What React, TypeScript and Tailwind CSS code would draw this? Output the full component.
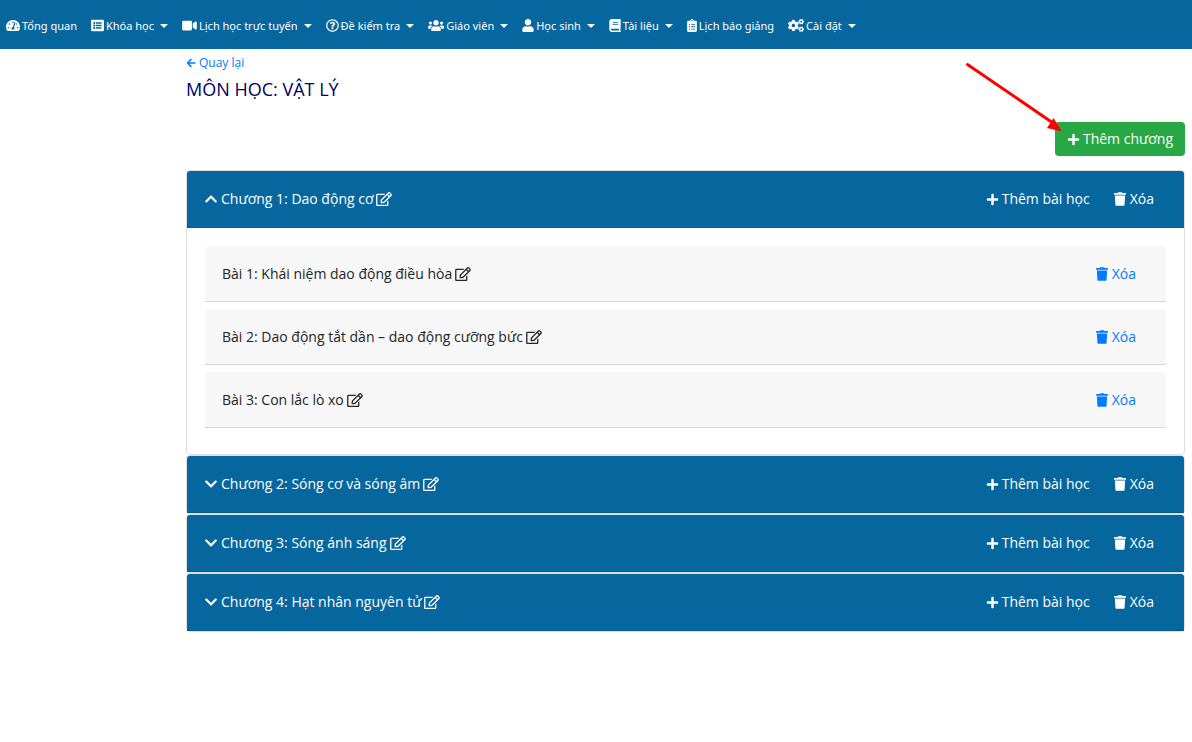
import { useState } from "react";
import type { IconType } from "react-icons";
import {
  FaArrowLeft,
  FaBook,
  FaChevronDown,
  FaChevronUp,
  FaClipboardList,
  FaCogs,
  FaListAlt,
  FaPlus,
  FaRegEdit,
  FaRegQuestionCircle,
  FaTachometerAlt,
  FaTrash,
  FaUser,
  FaUsers,
  FaVideo,
} from "react-icons/fa";

type NavItem = { label: string; icon: IconType; size: string; menu?: boolean };
type Chapter = { title: string; lessons: string[] };

const NAV: NavItem[] = [
  { label: "Tổng quan", icon: FaTachometerAlt, size: "w-[14px]" },
  { label: "Khóa học", icon: FaListAlt, size: "w-[13px]", menu: true },
  { label: "Lịch học trực tuyến", icon: FaVideo, size: "w-[15px]", menu: true },
  { label: "Đề kiểm tra", icon: FaRegQuestionCircle, size: "w-[13px]", menu: true },
  { label: "Giáo viên", icon: FaUsers, size: "w-4", menu: true },
  { label: "Học sinh", icon: FaUser, size: "w-3", menu: true },
  { label: "Tài liệu", icon: FaBook, size: "w-3", menu: true },
  { label: "Lịch báo giảng", icon: FaClipboardList, size: "w-[10px]" },
  { label: "Cài đặt", icon: FaCogs, size: "w-4", menu: true },
];

const CHAPTERS: Chapter[] = [
  {
    title: "Chương 1: Dao động cơ",
    lessons: [
      "Bài 1: Khái niệm dao động điều hòa",
      "Bài 2: Dao động tắt dần – dao động cưỡng bức",
      "Bài 3: Con lắc lò xo",
    ],
  },
  { title: "Chương 2: Sóng cơ và sóng âm", lessons: [] },
  { title: "Chương 3: Sóng ánh sáng", lessons: [] },
  { title: "Chương 4: Hạt nhân nguyên tử", lessons: [] },
];

export default function App() {
  const [open, setOpen] = useState(0);

  return (
    <div className="min-h-screen bg-white font-['Open_Sans','Noto_Sans',sans-serif] text-sm text-[#212529]">
      <Navbar />
      <main className="pr-[7px] pb-8 pl-[186px]">
        <a
          href="#subjects"
          className="mt-1 inline-flex items-center gap-[3px] text-xs leading-5 text-[#007bff]"
        >
          <FaArrowLeft className="size-[10px]" />
          Quay lại
        </a>
        <h1 className="mt-1 text-lg leading-6 font-medium text-[#000066]">
          MÔN HỌC: VẬT LÝ
        </h1>

        <div className="mt-[21px] flex justify-end">
          <div className="relative">
            <button
              type="button"
              className="flex h-[34px] items-center gap-[3px] rounded bg-[#28a745] px-3 text-white"
            >
              <FaPlus className="size-[13px]" />
              Thêm chương
            </button>
            <Pointer />
          </div>
        </div>

        <div className="mt-[14px]">
          {CHAPTERS.map((chapter, i) => (
            <ChapterCard
              key={chapter.title}
              chapter={chapter}
              expanded={open === i}
              onToggle={() => setOpen(open === i ? -1 : i)}
            />
          ))}
        </div>
      </main>
    </div>
  );
}

function Navbar() {
  return (
    <nav className="flex min-h-[49px] flex-wrap items-center gap-x-[14px] bg-[#06669e] px-[6px] pt-[3px] font-['Noto_Sans',sans-serif] text-[11px] text-white">
      {NAV.map(({ label, icon: Icon, size, menu }) => (
        <a
          key={label}
          href="#nav"
          className="flex items-center gap-[2px] whitespace-nowrap"
        >
          <Icon className={`h-[13px] shrink-0 ${size}`} />
          {label}
          {menu && (
            <span className="ml-1 border-x-4 border-t-4 border-x-transparent border-t-white" />
          )}
        </a>
      ))}
    </nav>
  );
}

function ChapterCard({
  chapter,
  expanded,
  onToggle,
}: {
  chapter: Chapter;
  expanded: boolean;
  onToggle: () => void;
}) {
  const Chevron = expanded ? FaChevronUp : FaChevronDown;

  return (
    <section className="rounded border border-[#dfdfdf]">
      <header className="flex h-[57px] items-center justify-between rounded-t-[3px] border-b border-[#055a8b] bg-[#06669e] pr-[30px] pl-[17px] text-white">
        <div className="flex items-center gap-[3px]">
          <button
            type="button"
            aria-expanded={expanded}
            onClick={onToggle}
            className="flex items-center gap-[3px]"
          >
            <Chevron className="size-[14px]" />
            {chapter.title}
          </button>
          <EditButton />
        </div>
        <div className="flex items-center gap-6">
          <button type="button" className="flex items-center gap-[3px]">
            <FaPlus className="size-[13px]" />
            Thêm bài học
          </button>
          <DeleteButton />
        </div>
      </header>
      {expanded && (
        <ul className="flex flex-col gap-[7px] px-[18px] pt-[18px] pb-[26px]">
          {chapter.lessons.map((lesson) => (
            <li
              key={lesson}
              className="flex h-14 items-center justify-between rounded-t border-b border-[#d7d7d7] bg-[#f7f7f7] pr-[30px] pl-[17px]"
            >
              <div className="flex items-center gap-[3px]">
                {lesson}
                <EditButton />
              </div>
              <div className="flex text-[#007bff]">
                <DeleteButton />
              </div>
            </li>
          ))}
        </ul>
      )}
    </section>
  );
}

function EditButton() {
  return (
    <button type="button" aria-label="Sửa">
      <FaRegEdit className="h-[14px] w-4" />
    </button>
  );
}

function DeleteButton() {
  return (
    <button type="button" className="flex items-center gap-1">
      <FaTrash className="h-[14px] w-3" />
      Xóa
    </button>
  );
}

// Red arrow that points at the corner of the add button
function Pointer() {
  return (
    <svg
      width="100"
      height="72"
      viewBox="0 0 100 72"
      aria-hidden="true"
      className="pointer-events-none absolute right-[121px] bottom-6"
    >
      <path
        d="M3.5 4.5 89 63"
        stroke="#ff0000"
        strokeWidth="3"
        strokeLinecap="round"
      />
      <path d="M98 71.500 83 68 89.500 58Z" fill="#ff0000" />
    </svg>
  );
}
